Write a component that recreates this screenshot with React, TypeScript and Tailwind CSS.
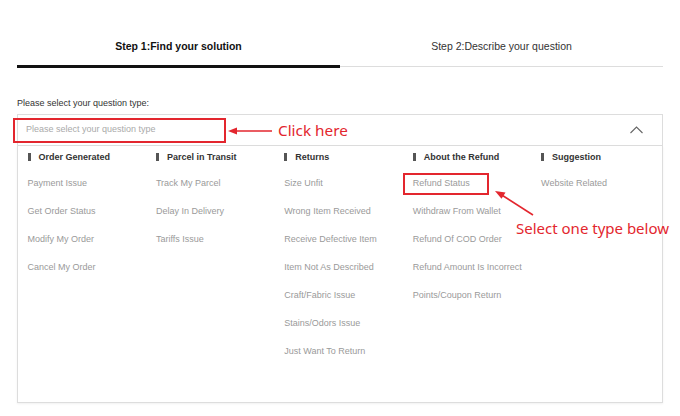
const columns = [
  {
    title: 'Order Generated',
    items: ['Payment Issue', 'Get Order Status', 'Modify My Order', 'Cancel My Order'],
  },
  {
    title: 'Parcel in Transit',
    items: ['Track My Parcel', 'Delay In Delivery', 'Tariffs Issue'],
  },
  {
    title: 'Returns',
    items: [
      'Size Unfit',
      'Wrong Item Received',
      'Receive Defective Item',
      'Item Not As Described',
      'Craft/Fabric Issue',
      'Stains/Odors Issue',
      'Just Want To Return',
    ],
  },
  {
    title: 'About the Refund',
    items: [
      'Refund Status',
      'Withdraw From Wallet',
      'Refund Of COD Order',
      'Refund Amount Is Incorrect',
      'Points/Coupon Return',
    ],
  },
  {
    title: 'Suggestion',
    items: ['Website Related'],
  },
];

function ChevronUp() {
  return (
    <svg width="13" height="8" viewBox="0 0 13 8" fill="none">
      <polyline points="0.5,7 6.5,1 12.5,7" stroke="#666" strokeWidth="1.1" />
    </svg>
  );
}

export default function App() {
  return (
    <div
      className="relative w-[680px] h-[416px] overflow-hidden bg-white px-[17px] pt-[38px]"
      style={{ fontFamily: '"Liberation Sans", Arial, sans-serif' }}
    >
      {/* steps */}
      <div className="flex items-start">
        <div className="flex-1 border-b-[3px] border-[#111] pb-[11px] text-center text-[10.5px] leading-[16px] font-bold text-[#111]">
          Step 1:Find your solution
        </div>
        <div className="flex-1 border-b border-[#ddd] pb-[12px] text-center text-[10.5px] leading-[16px] text-[#333]">
          Step 2:Describe your question
        </div>
      </div>

      <div className="mt-[29px] text-[9px] leading-[12px] text-[#333]">Please select your question type:</div>

      {/* select */}
      <div className="mt-[5px] flex h-[32px] items-center justify-between border border-[#ddd] pl-[8px] pr-[19px]">
        <span className="text-[9px] text-[#aaa]">Please select your question type</span>
        <ChevronUp />
      </div>

      {/* dropdown panel */}
      <div className="grid grid-cols-[repeat(5,128.4px)] border-x border-b border-[#ddd] pt-[5px] pb-[45px] shadow-[0_1px_2px_rgba(0,0,0,0.06)]">
        {columns.map((col) => (
          <div key={col.title} className="flex flex-col gap-[16px] pl-[9.5px]">
            <div className="flex items-center gap-[8px] text-[9px] leading-[12px] font-bold text-[#333]">
              <span className="h-[8px] w-[3px] bg-[#555]" />
              {col.title}
            </div>
            <div className="mt-[-2px] flex flex-col gap-[16px]">
              {col.items.map((item) => (
                <div key={item} className="text-[9px] leading-[12px] text-[#9a9a9a]">
                  {item}
                </div>
              ))}
            </div>
          </div>
        ))}
      </div>

      {/* annotations */}
      <div className="pointer-events-none absolute left-[13px] top-[118px] h-[25px] w-[213px] border-2 border-[#e3262e]" />
      <div className="pointer-events-none absolute left-[403px] top-[173px] h-[22px] w-[86px] border-2 border-[#e3262e]" />
      <svg className="pointer-events-none absolute left-0 top-0" width="680" height="416">
        <line x1="272" y1="131" x2="234" y2="131" stroke="#e3262e" strokeWidth="1.6" />
        <polygon points="228,131 237,127.5 237,134.5" fill="#e3262e" />
        <line x1="533" y1="215" x2="501" y2="194.5" stroke="#e3262e" strokeWidth="1.6" />
        <polygon points="495,191 505.5,192.5 501.5,198.8" fill="#e3262e" />
      </svg>
      <div
        className="absolute left-[278px] top-[120px] text-[15.3px] leading-[20px] text-[#e3262e]"
        style={{ fontFamily: '"Noto Sans", sans-serif' }}
      >
        Click here
      </div>
      <div
        className="absolute left-[516px] top-[218px] text-[15px] leading-[20px] text-[#e3262e]"
        style={{ fontFamily: '"Noto Sans", sans-serif' }}
      >
        Select one type below
      </div>
    </div>
  );
}
